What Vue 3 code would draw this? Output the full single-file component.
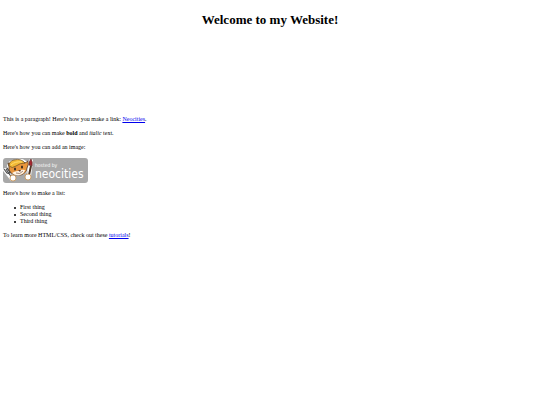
<template>
  <main class="page">
    <h1>Welcome to my Website!</h1>

    <p>This is a paragraph! Here's how you make a link: <a href="#neocities">Neocities</a>.</p>

    <p>Here's how you can make <strong>bold</strong> and <em>italic</em> text.</p>

    <p>Here's how you can add an image:</p>

    <svg class="badge" viewBox="0 0 85 25" role="img" aria-label="hosted by neocities">
      <rect width="85" height="25" rx="3" fill="#a8a8a8" />
      <!-- white edge behind the cat and its tools -->
      <path d="M4 8 Q5 2 11 2 Q18 -1 23 3 L26 3 Q27 9 24 14 Q19 19 11 17 Q6 16 4 8Z" fill="#fff" />
      <path d="M2 12 L9 21 M28 3 L26 18" stroke="#fff" stroke-width="4" stroke-linecap="round" />
      <!-- head -->
      <path d="M6 9 L5 5 L10 6 Q17 2 22 5 L25 3 Q26 7 24 10 Q24 15 18 17 Q11 18 8 15 Q5 13 6 9Z" fill="#e9963c" stroke="#4f3525" stroke-width="0.8" />
      <path d="M9 15 Q12 13 15 13 Q19 11 22 12 Q21 16 17 17 Q12 18 9 15Z" fill="#fff3e4" />
      <path d="M6 8 Q6 3 11 2 Q18 0 22 5 Q17 5 13 8 Q9 11 6 8Z" fill="#f2b936" stroke="#684b25" stroke-width="0.7" />
      <path d="M8 7 Q12 3 19 4" fill="none" stroke="#ffdc70" />
      <ellipse cx="12" cy="11" rx="1" ry="1.5" fill="#36291f" />
      <ellipse cx="19" cy="9" rx="1" ry="1.5" fill="#36291f" />
      <path d="M15 12 H18 L17 14Z" fill="#69402e" />
      <path d="M13 15 Q17 17 20 13" fill="none" stroke="#69402e" stroke-width="0.6" />
      <!-- fork and brush -->
      <path d="M1 11 L4 15 Q6 16 7 14 L4 10 M3 11 L9 20" fill="none" stroke="#484848" stroke-width="1.1" />
      <path d="M28 8 L26 17" stroke="#4f3525" stroke-width="2" />
      <path d="M26 7 Q26 3 28 1 Q30 4 29 8Z" fill="#a72731" stroke="#5b2927" stroke-width="0.7" />
      <circle cx="10" cy="20" r="3" fill="#fff" stroke="#c9904e" stroke-width="0.8" />
      <circle cx="25" cy="19" r="3" fill="#fff" stroke="#c9904e" stroke-width="0.8" />
      <text class="hosted" x="32" y="9">hosted by</text>
      <text class="brand" x="32" y="20">neocities</text>
    </svg>

    <p>Here's how to make a list:</p>

    <ul>
      <li v-for="item in items" :key="item">{{ item }}</li>
    </ul>

    <p>To learn more HTML/CSS, check out these <a href="#tutorials">tutorials</a>!</p>
  </main>
</template>

<script setup>
const items = ['First thing', 'Second thing', 'Third thing']
</script>

<style>
body {
  margin: 0;
  background: #fff;
}
</style>

<style scoped>
.page {
  padding: 12px 3px;
  color: #000;
  font-family: 'Liberation Serif', 'Times New Roman', serif;
  font-size: 6px;
  line-height: 7px;
}

h1 {
  margin: 0 0 89px;
  font-size: 13px;
  line-height: 15px;
  text-align: center;
}

p {
  margin: 0 0 7px;
}

a {
  color: #0000ee;
  text-decoration: underline;
}

.badge {
  display: block;
  width: 85px;
  height: 25px;
  margin-bottom: 7px;
}

.hosted,
.brand {
  fill: #fff;
  font-family: 'DejaVu Sans Condensed', 'Open Sans', sans-serif;
}

.hosted {
  font-size: 5px;
}

.brand {
  font-size: 12px;
}

ul {
  margin: 0 0 7px;
  padding-left: 11px;
  list-style: none;
}

li {
  display: flex;
  align-items: center;
  gap: 4px;
}

li::before {
  content: '';
  width: 2px;
  height: 2px;
  border-radius: 50%;
  background: #000;
}
</style>
